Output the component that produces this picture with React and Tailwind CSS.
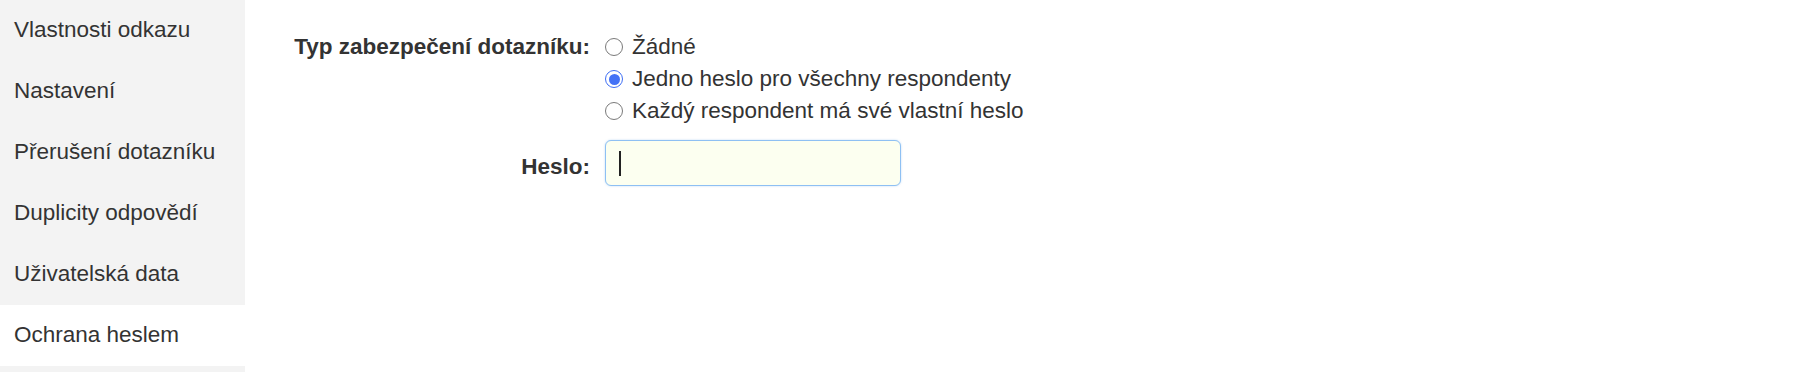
import React from "react";

const items = [
  "Vlastnosti odkazu",
  "Nastavení",
  "Přerušení dotazníku",
  "Duplicity odpovědí",
  "Uživatelská data",
  "Ochrana heslem",
];

function Radio({ checked }) {
  if (checked) {
    return (
      <span className="flex h-[18px] w-[18px] shrink-0 items-center justify-center rounded-full border-[1.5px] border-[#3f6ff4] bg-white">
        <span className="h-[11px] w-[11px] rounded-full bg-[#4472f6]" />
      </span>
    );
  }
  return (
    <span className="h-[18px] w-[18px] shrink-0 rounded-full border border-[#7a7a7a] bg-white" />
  );
}

const options = [
  { label: "Žádné", checked: false },
  { label: "Jedno heslo pro všechny respondenty", checked: true },
  { label: "Každý respondent má své vlastní heslo", checked: false },
];

export default function App() {
  return (
    <div
      className="flex min-h-screen bg-white text-[22.5px] text-[#333333]"
      style={{ fontFamily: '"Liberation Sans", Arial, sans-serif' }}
    >
      <nav className="w-[245px] shrink-0 bg-[#f3f3f3]">
        {items.map((it) => (
          <div
            key={it}
            className={
              it === "Ochrana heslem"
                ? "flex h-[61px] items-center bg-white px-[14px] pb-[2px]"
                : "flex h-[61px] items-center px-[14px] pb-[2px]"
            }
          >
            {it}
          </div>
        ))}
      </nav>
      <main className="flex-1 pt-[31px]">
        <div className="grid grid-cols-[345px_auto] gap-x-[15px]">
          <div className="text-right font-bold leading-[32px]">
            Typ zabezpečení dotazníku:
          </div>
          <div className="flex flex-col">
            {options.map((o) => (
              <label
                key={o.label}
                className="flex h-[32px] items-center gap-[9px] leading-[32px]"
              >
                <Radio checked={o.checked} />
                <span>{o.label}</span>
              </label>
            ))}
          </div>
          <div className="mt-[13px] flex items-center justify-end pt-[8px] font-bold">
            Heslo:
          </div>
          <div className="mt-[13px]">
            <div className="flex h-[46px] w-[296px] items-center rounded-[6px] border border-[#8ec0f3] bg-[#fcfff0] pl-[13px] shadow-[0_0_2px_rgba(120,180,240,0.5)]">
              <span className="h-[25px] w-[1.5px] bg-[#222222]" />
            </div>
          </div>
        </div>
      </main>
    </div>
  );
}
